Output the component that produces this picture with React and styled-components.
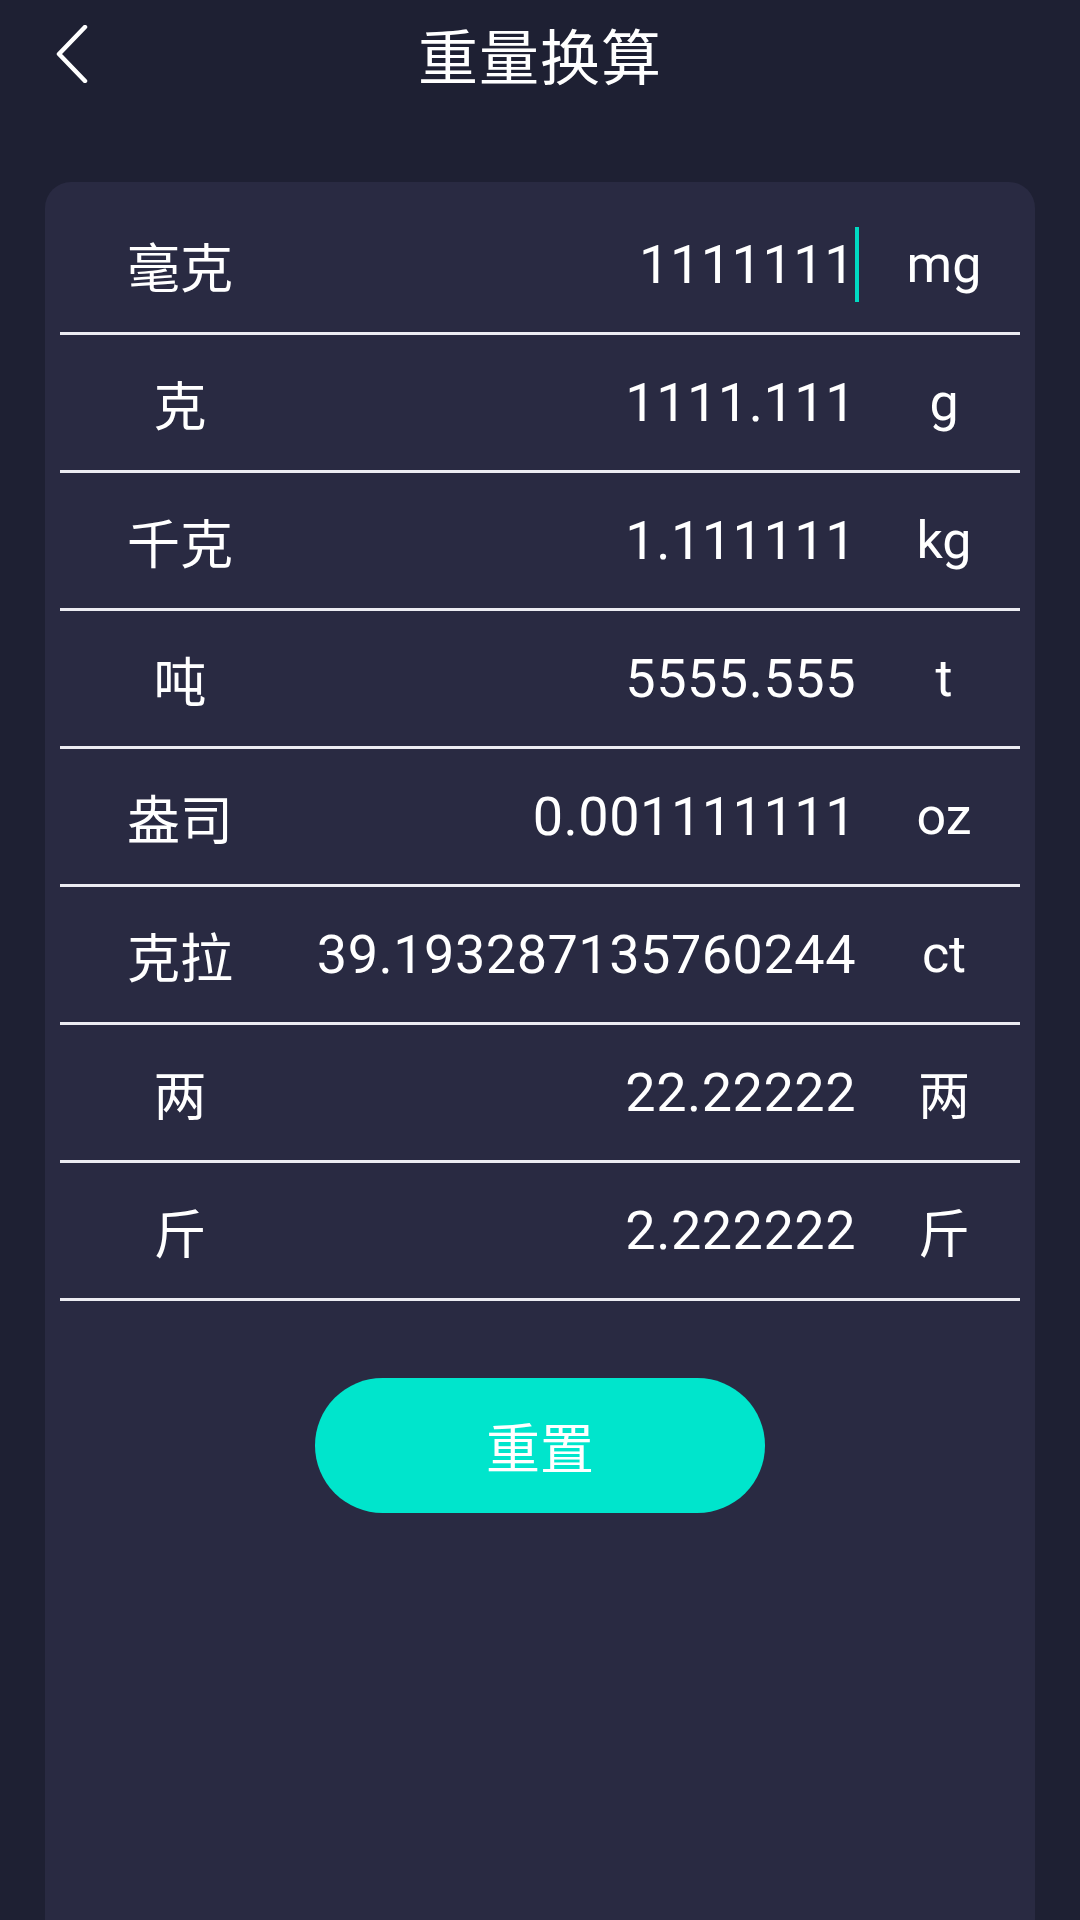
import React, { useState } from "react";
import styled, { createGlobalStyle } from "styled-components";

const units = [
  { name: "毫克", value: "1111111", unit: "mg", active: true },
  { name: "克", value: "1111.111", unit: "g" },
  { name: "千克", value: "1.111111", unit: "kg" },
  { name: "吨", value: "5555.555", unit: "t" },
  { name: "盎司", value: "0.001111111", unit: "oz" },
  { name: "克拉", value: "39.193287135760244", unit: "ct" },
  { name: "两", value: "22.22222", unit: "两" },
  { name: "斤", value: "2.222222", unit: "斤" },
];

const GlobalStyle = createGlobalStyle`
  html, body {
    margin: 0;
    padding: 0;
    background: #1e2033;
  }
  body {
    font-family: Roboto, "Noto Sans CJK SC", sans-serif;
    color: #ffffff;
  }
`;

const Page = styled.div`
  width: 1080px;
  height: 1920px;
  background: #1e2033;
  display: flex;
  flex-direction: column;
  overflow: hidden;
`;

const Header = styled.div`
  position: relative;
  height: 106px;
  display: flex;
  align-items: center;
  justify-content: center;
  margin-bottom: 76px;
`;

const BackButton = styled.button`
  position: absolute;
  left: 44px;
  top: 22px;
  width: 56px;
  height: 64px;
  padding: 0;
  border: none;
  background: transparent;
  display: flex;
  align-items: center;
  justify-content: center;
`;

const Title = styled.h1`
  margin: 0;
  font-family: "Noto Sans CJK SC", sans-serif;
  font-size: 60px;
  font-weight: 400;
  letter-spacing: 1px;
`;

const Card = styled.div`
  flex: 1;
  margin: 0 45px;
  padding: 15px 15px 0;
  background: #292a42;
  border-radius: 26px 26px 0 0;
  display: flex;
  flex-direction: column;
`;

const Row = styled.div`
  height: 135px;
  display: flex;
  align-items: center;
  border-bottom: 3px solid #ececf2;
`;

const Label = styled.div`
  width: 240px;
  text-align: center;
  font-family: "Noto Sans CJK SC", sans-serif;
  font-size: 53px;
`;

const Value = styled.div`
  flex: 1;
  display: flex;
  justify-content: flex-end;
  align-items: center;
  padding-right: 12px;
  font-size: 54px;
  letter-spacing: 0.5px;
`;

const Cursor = styled.span`
  display: inline-block;
  width: 4px;
  height: 75px;
  margin-right: -3px;
  background: #00d9c2;
`;

const Unit = styled.div`
  width: 152px;
  text-align: center;
  font-family: Roboto, "Noto Sans CJK SC", sans-serif;
  font-size: 52px;
`;

const ButtonWrap = styled.div`
  display: flex;
  justify-content: center;
  margin-top: 77px;
`;

const ResetButton = styled.button`
  width: 450px;
  height: 135px;
  border: none;
  border-radius: 68px;
  background: #00e5cc;
  color: #ffffff;
  font-family: "Noto Sans CJK SC", sans-serif;
  font-size: 54px;
  cursor: pointer;
`;

const App = () => {
  const [rows] = useState(units);

  return (
    <Page>
      <GlobalStyle />
      <Header>
        <BackButton>
          <svg width="34" height="58" viewBox="0 0 34 58" fill="none">
            <path d="M30 2 L4 29 L30 56" stroke="#fff" strokeWidth="4.5" strokeLinecap="round" strokeLinejoin="round" />
          </svg>
        </BackButton>
        <Title>重量换算</Title>
      </Header>
      <Card>
        {rows.map((r) => (
          <Row key={r.name}>
            <Label>{r.name}</Label>
            <Value>
              {r.value}
              {r.active && <Cursor />}
            </Value>
            <Unit>{r.unit}</Unit>
          </Row>
        ))}
        <ButtonWrap>
          <ResetButton>重置</ResetButton>
        </ButtonWrap>
      </Card>
    </Page>
  );
};

export default App;
